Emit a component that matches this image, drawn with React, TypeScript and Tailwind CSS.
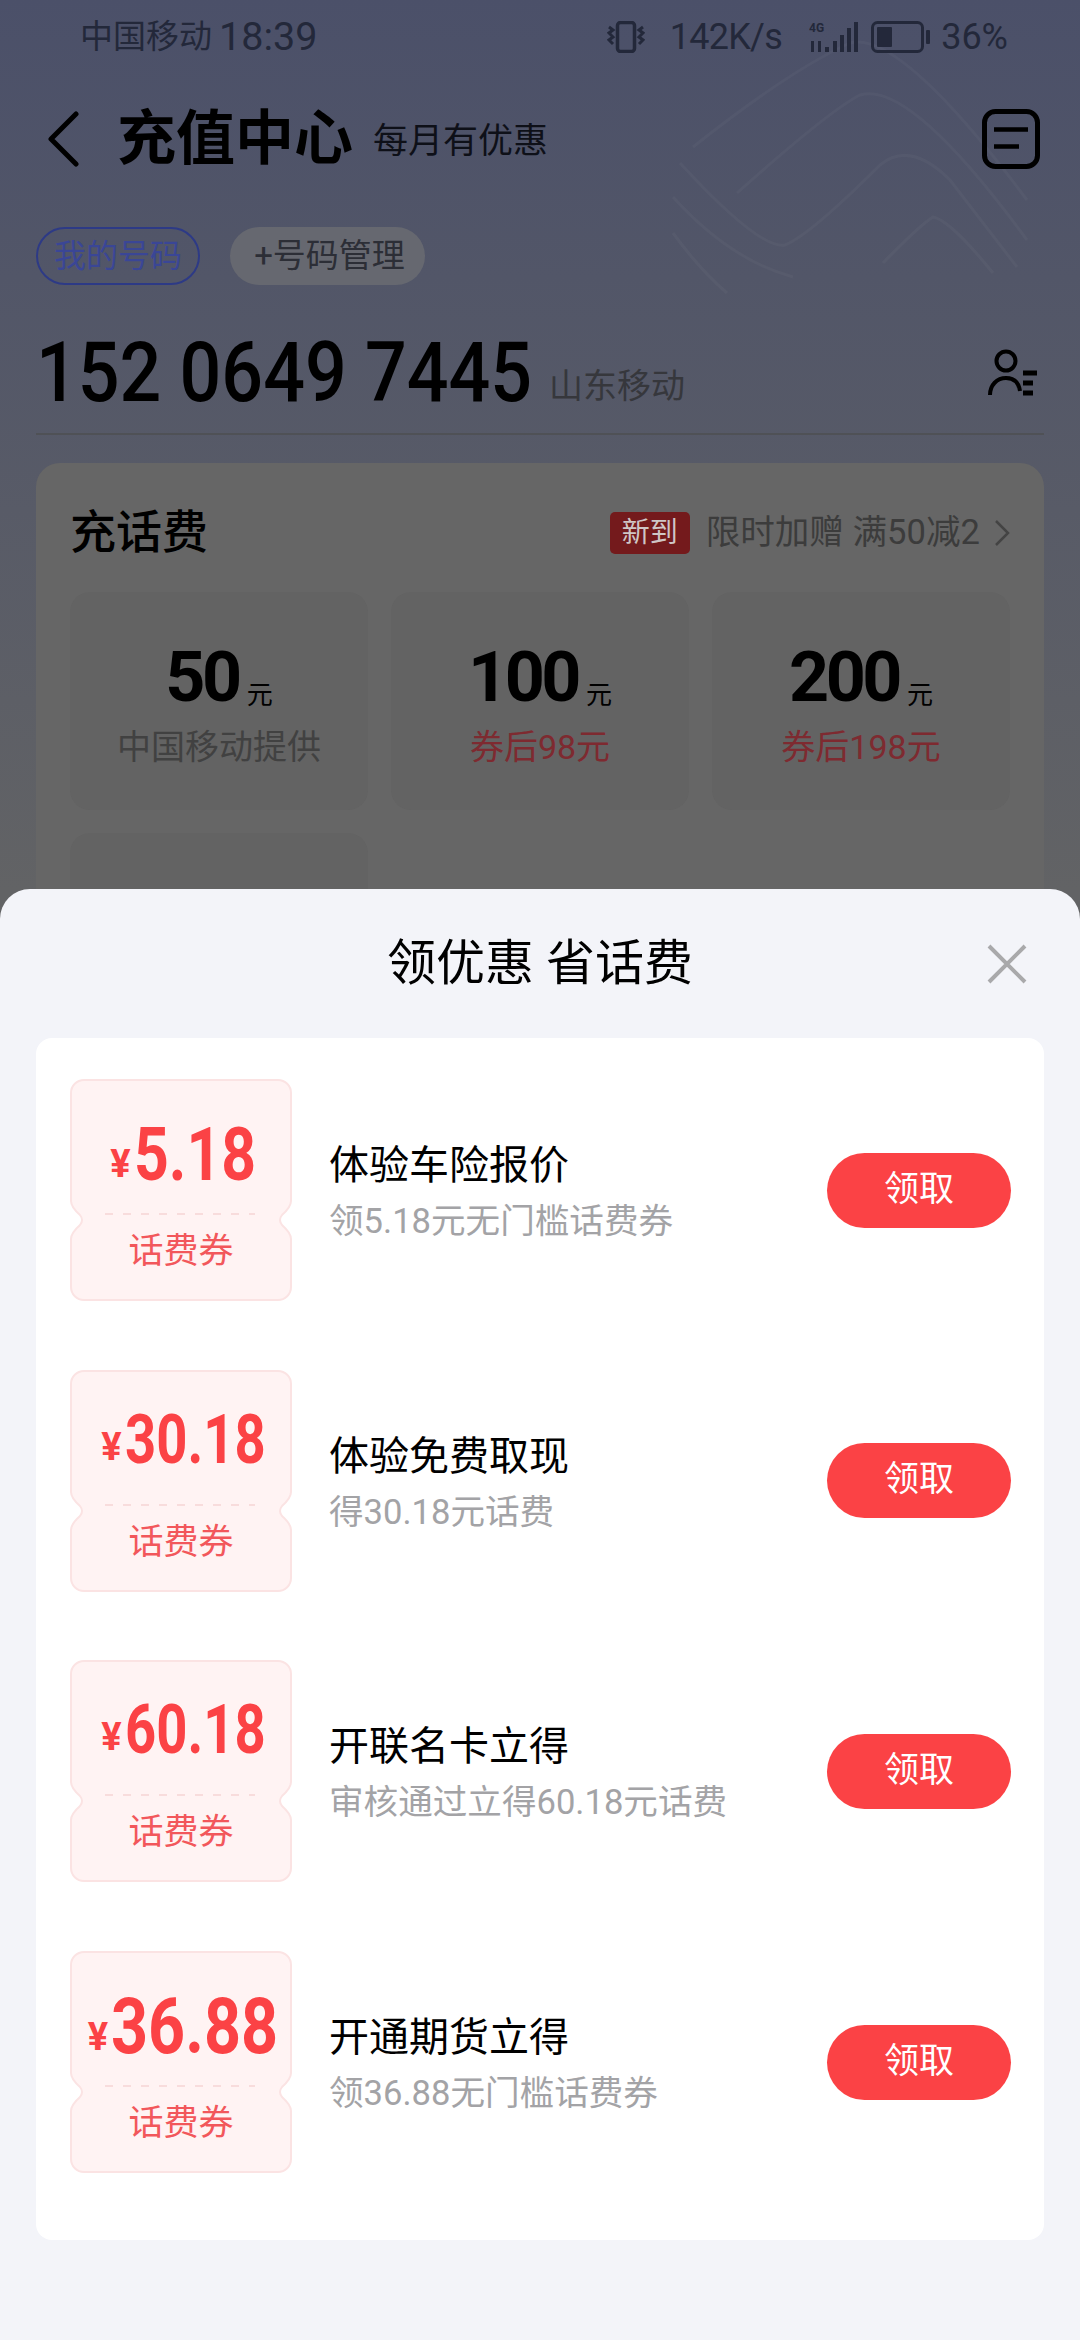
const cjk = "font-['Roboto','Noto_Sans_CJK_SC',sans-serif]";

const coupons = [
  { amount: "5.18", digits: "text-[75px] w-[118px] scale-x-[0.81]", name: "体验车险报价", desc: "领5.18元无门槛话费券" },
  { amount: "30.18", digits: "text-[68px] w-[136px] scale-x-[0.8]", name: "体验免费取现", desc: "得30.18元话费" },
  { amount: "60.18", digits: "text-[68px] w-[136px] scale-x-[0.8]", name: "开联名卡立得", desc: "审核通过立得60.18元话费" },
  { amount: "36.88", digits: "text-[77px] w-[163px] scale-x-[0.84]", name: "开通期货立得", desc: "领36.88无门槛话费券" },
];

function Ticket({ amount, digits }: { amount: string; digits: string }) {
  return (
    <div className="relative w-[222px] h-[222px] shrink-0">
      <svg className="absolute inset-0" width="222" height="222" viewBox="0 0 222 222" fill="none">
        <path
          d="M14 1H208A13 13 0 0 1 221 14V122Q221 128 212 136Q208 141 212 146Q221 154 221 160V208A13 13 0 0 1 208 221H14A13 13 0 0 1 1 208V160Q1 154 10 146Q14 141 10 136Q1 128 1 122V14A13 13 0 0 1 14 1Z"
          fill="#fff3f3"
          stroke="#fbe3e3"
          strokeWidth="2"
        />
        <line x1="35" y1="135" x2="185" y2="135" stroke="#f8dcdc" strokeWidth="2" strokeDasharray="8 10" />
      </svg>
      <div className="relative flex flex-col items-center h-full">
        <div className="h-[135px] pt-[19px] flex items-baseline justify-center gap-[3px] text-[#fb4245] font-bold">
          <span className="text-[38px] -translate-y-[3px]">¥</span>
          <span className={`inline-block origin-left whitespace-nowrap ${digits}`}>{amount}</span>
        </div>
        <div className="mt-[15px] text-[35px] leading-[46px] text-[#f2575b]">话费券</div>
      </div>
    </div>
  );
}

function CouponRow({ item }: { item: (typeof coupons)[number] }) {
  return (
    <div className="flex items-center h-[222px]">
      <Ticket amount={item.amount} digits={item.digits} />
      <div className="ml-[37px] pt-[5px] flex-1 flex flex-col">
        <span className="text-[40px] leading-[50px] text-black">{item.name}</span>
        <span className="text-[34.6px] leading-[46px] text-[#a3a3a6] mt-[7px]">{item.desc}</span>
      </div>
      <button className="w-[184px] h-[75px] rounded-full bg-[#fb4245] text-white text-[35px]">领取</button>
    </div>
  );
}

function PriceTile({ value, sub, red }: { value: string; sub: string; red?: boolean }) {
  return (
    <div className="h-[218px] rounded-[20px] bg-[#636363] flex flex-col items-center pt-[49px]">
      <div className="flex items-end text-black">
        <span className="text-[70px] leading-[72px] font-bold tracking-[-3.5px]">{value}</span>
        <span className="text-[26px] leading-[36px] ml-[8px]">元</span>
      </div>
      <span className={`mt-[11px] text-[34px] leading-[46px] ${red ? "text-[#7e2a30]" : "text-[#414141]"}`}>{sub}</span>
    </div>
  );
}

export default function App() {
  return (
    <div className={`w-[1080px] h-[2340px] overflow-hidden flex flex-col bg-[#626365] ${cjk}`}>
      {/* dimmed page behind the sheet */}
      <div className="relative h-[889px] shrink-0 overflow-hidden bg-gradient-to-b from-[#4b5069] to-[#626365]">
        <svg className="absolute left-[660px] top-[30px]" width="380" height="280" viewBox="0 0 380 280" fill="none" stroke="#fff" strokeOpacity="0.03" strokeWidth="3">
          <path d="M33 117Q130 40 190 13Q240 0 367 170" />
          <path d="M77 163Q170 80 200 65Q250 50 367 210" />
          <path d="M20 133Q100 220 125 215Q150 205 220 135Q250 110 290 150L357 237" />
          <path d="M13 167Q70 230 133 247" />
          <path d="M13 203Q40 240 67 263" />
          <path d="M223 233Q260 195 273 187Q290 190 333 243" />
        </svg>

        {/* status bar */}
        <div className="relative flex items-center justify-between h-[74px] pl-[80px] pr-[72px] text-[#23283a]">
          <div className="flex items-center gap-[7px]">
            <span className="text-[33px]">中国移动</span>
            <span className="text-[39.5px]">18:39</span>
          </div>
          <div className="flex items-center">
            <svg width="38" height="32" viewBox="0 0 38 32" fill="none" stroke="#23283a" strokeWidth="3">
              <rect x="10.5" y="1.5" width="17" height="29" rx="3" strokeWidth="3.5" />
              <path d="M2 6l4 3-4 3 4 4-4 3 4 4" />
              <path d="M36 6l-4 3 4 3-4 4 4 3-4 4" />
            </svg>
            <span className="ml-[25px] text-[36px] tracking-[-0.7px]">142K/s</span>
            <svg className="ml-[27px]" width="50" height="32" viewBox="0 0 50 32" fill="#23283a">
              <text x="0" y="11" fontSize="12" fontWeight="700" fontFamily="Roboto">4G</text>
              <rect x="24" y="20" width="4" height="11" />
              <rect x="31" y="14" width="4" height="17" />
              <rect x="38" y="7" width="4" height="24" />
              <rect x="45" y="1" width="4" height="30" />
              <rect x="2" y="20" width="3" height="11" />
              <rect x="9" y="20" width="3" height="11" />
              <rect x="16" y="26" width="4" height="5" />
            </svg>
            <svg className="ml-[12px]" width="60" height="32" viewBox="0 0 60 32" fill="none">
              <rect x="1.5" y="1.5" width="50" height="29" rx="5" stroke="#23283a" strokeWidth="3" />
              <rect x="6" y="6" width="15" height="20" rx="1" fill="#23283a" />
              <rect x="55" y="9" width="4" height="14" rx="1" fill="#23283a" />
            </svg>
            <span className="ml-[10px] text-[36px]">36%</span>
          </div>
        </div>

        {/* title row */}
        <div className="relative flex items-center h-[100px] mt-[15px] pl-[47px] pr-[40px]">
          <svg width="32" height="56" viewBox="0 0 32 56" fill="none" stroke="#000" strokeWidth="5" strokeLinecap="round" strokeLinejoin="round">
            <path d="M29 3L4 28l25 25" />
          </svg>
          <span className="ml-[38px] text-[59px] font-bold text-black">充值中心</span>
          <span className="ml-[20px] mt-[6px] text-[35px] text-[#0e1018]">每月有优惠</span>
          <svg className="ml-auto" width="58" height="60" viewBox="0 0 58 60" fill="none" stroke="#000">
            <rect x="2.5" y="2.5" width="53" height="55" rx="11" strokeWidth="5" />
            <path d="M12 20.5h34M12 37.5h25" strokeWidth="4.5" />
          </svg>
        </div>

        {/* number chips */}
        <div className="relative flex gap-[30px] mt-[38px] pl-[36px]">
          <span className="w-[164px] h-[58px] flex items-center justify-center rounded-full border-2 border-[#2d3a86] text-[32px] text-[#3a4696]">我的号码</span>
          <span className="w-[195px] h-[58px] pl-[4px] flex items-center justify-center rounded-full bg-[#666870] text-[33px] text-[#2c2e36]">+号码管理</span>
        </div>

        {/* phone number */}
        <div className="relative flex items-end h-[88px] mt-[42px] pl-[36px] pr-[37px]">
          <span className="inline-block w-[498px] origin-left scale-x-[0.875] whitespace-nowrap text-[84px] leading-[84px] font-medium text-black">152 0649 7445</span>
          <span className="ml-[15px] mb-[6px] text-[34px] leading-[46px] text-[#36373c]">山东移动</span>
          <svg className="ml-auto mb-[16px] mr-[6px]" width="50" height="50" viewBox="0 0 50 50" fill="none" stroke="#000" strokeWidth="4">
            <circle cx="19" cy="12" r="9.5" />
            <path d="M3 46c0-10 7-17 16-17s13 6 14 13" />
            <path d="M36 24h14M36 34h10M36 44h10" strokeWidth="5" />
          </svg>
        </div>
        <div className="relative mx-[36px] mt-[18px] h-[2px] bg-[#4f5156]" />

        {/* top up card */}
        <div className="relative mx-[36px] mt-[28px] h-[500px] rounded-[24px] bg-[#666666] px-[34px]">
          <div className="flex items-center h-[129px] pt-[10px]">
            <span className="text-[46px] font-medium text-black">充话费</span>
            <span className="ml-auto w-[80px] h-[42px] flex items-center justify-center rounded-[5px] bg-[#741a1c] text-[28px] text-[#cfc6c6]">新到</span>
            <span className="ml-[16px] text-[34.6px] text-[#3c3c3c]">限时加赠 满50减2</span>
            <svg className="ml-[14px]" width="16" height="28" viewBox="0 0 16 28" fill="none" stroke="#444" strokeWidth="2.5">
              <path d="M2 2l12 12L2 26" />
            </svg>
          </div>
          <div className="grid grid-cols-3 gap-x-[23px] gap-y-[23px]">
            <PriceTile value="50" sub="中国移动提供" />
            <PriceTile value="100" sub="券后98元" red />
            <PriceTile value="200" sub="券后198元" red />
            <div className="h-[218px] rounded-[20px] bg-[#636363]" />
          </div>
        </div>
      </div>

      {/* coupon sheet */}
      <div className="flex-1 rounded-t-[30px] bg-[#f3f4f9] px-[36px]">
        <div className="relative h-[149px] flex items-center justify-center">
          <span className="text-[49px] text-black">领优惠 省话费</span>
          <svg className="absolute right-[17px] top-[55px]" width="40" height="40" viewBox="0 0 40 40" fill="none" stroke="#a9a9ab" strokeWidth="4">
            <path d="M2 2l36 36M38 2L2 38" />
          </svg>
        </div>
        <div className="h-[1202px] rounded-[16px] bg-white pt-[41px] pl-[34px] pr-[33px] flex flex-col gap-[68.7px]">
          {coupons.map((item) => (
            <CouponRow key={item.amount} item={item} />
          ))}
        </div>
      </div>
    </div>
  );
}
